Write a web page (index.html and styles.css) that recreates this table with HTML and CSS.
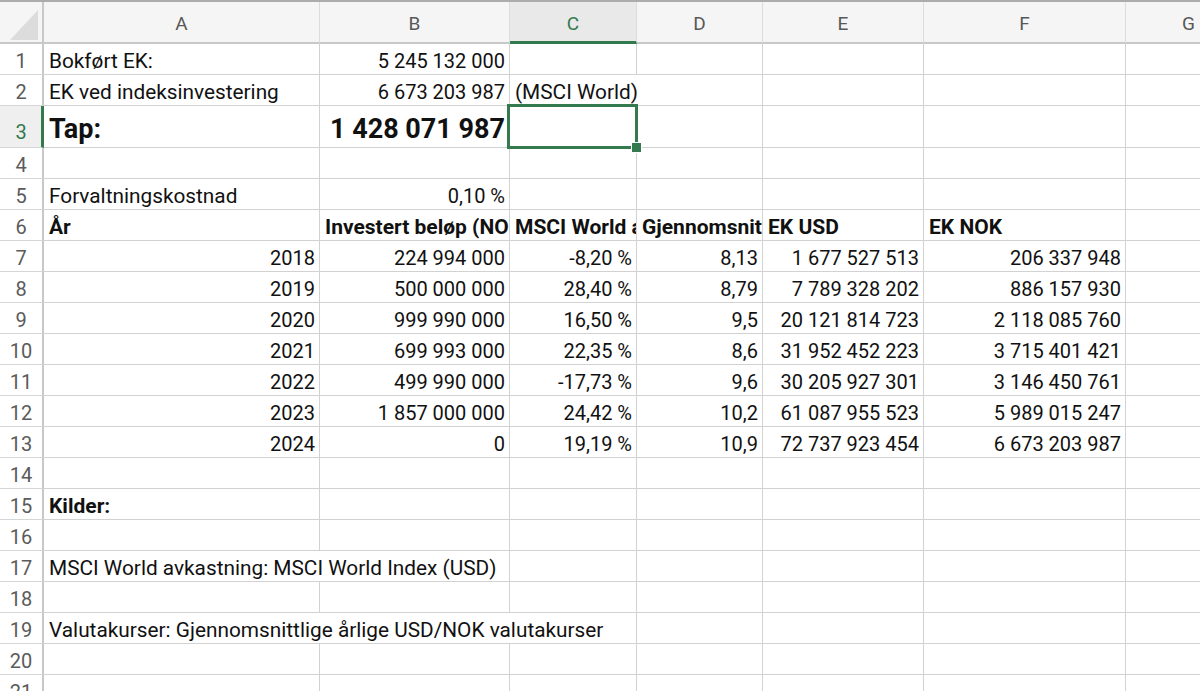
FILE: index.html
```html
<!DOCTYPE html>
<html lang="no">
<head>
<meta charset="utf-8">
<title>Regneark</title>
<link rel="stylesheet" href="styles.css">
</head>
<body>
<div class="sheet">
  <div class="row hdr">
    <div class="corner"><svg width="28" height="30" viewBox="0 0 28 30"><polygon points="28,0 28,30 0,30" fill="#dcdcdc"/></svg></div>
    <div class="ch">A</div><div class="ch">B</div><div class="ch sel">C</div><div class="ch">D</div><div class="ch">E</div><div class="ch">F</div><div class="ch">G</div>
  </div>

  <div class="row">
    <div class="rh">1</div>
    <div class="cell">Bokført EK:</div><div class="cell num">5 245 132 000</div>
    <div class="cell"></div><div class="cell"></div><div class="cell"></div><div class="cell"></div><div class="cell"></div>
  </div>
  <div class="row">
    <div class="rh">2</div>
    <div class="cell">EK ved indeksinvestering</div><div class="cell num">6 673 203 987</div>
    <div class="cell span2">(MSCI World)</div><div class="cell"></div><div class="cell"></div><div class="cell"></div>
  </div>
  <div class="row tall">
    <div class="rh rsel">3</div>
    <div class="cell big">Tap:</div><div class="cell num big">1 428 071 987</div>
    <div class="cell active"><span class="selbox"></span><span class="handle"></span></div><div class="cell"></div><div class="cell"></div><div class="cell"></div><div class="cell"></div>
  </div>
  <div class="row">
    <div class="rh">4</div>
    <div class="cell"></div><div class="cell"></div><div class="cell"></div><div class="cell"></div><div class="cell"></div><div class="cell"></div><div class="cell"></div>
  </div>
  <div class="row">
    <div class="rh">5</div>
    <div class="cell">Forvaltningskostnad</div><div class="cell num">0,10 %</div>
    <div class="cell"></div><div class="cell"></div><div class="cell"></div><div class="cell"></div><div class="cell"></div>
  </div>
  <div class="row">
    <div class="rh">6</div>
    <div class="cell b">År</div><div class="cell b">Investert beløp (NOK)</div><div class="cell b">MSCI World avkastning</div><div class="cell b">Gjennomsnittlig USD/NOK</div><div class="cell b">EK USD</div><div class="cell b">EK NOK</div><div class="cell"></div>
  </div>
  <div class="row">
    <div class="rh">7</div>
    <div class="cell num">2018</div><div class="cell num">224 994 000</div><div class="cell num">-8,20 %</div><div class="cell num">8,13</div><div class="cell num">1 677 527 513</div><div class="cell num">206 337 948</div><div class="cell"></div>
  </div>
  <div class="row">
    <div class="rh">8</div>
    <div class="cell num">2019</div><div class="cell num">500 000 000</div><div class="cell num">28,40 %</div><div class="cell num">8,79</div><div class="cell num">7 789 328 202</div><div class="cell num">886 157 930</div><div class="cell"></div>
  </div>
  <div class="row">
    <div class="rh">9</div>
    <div class="cell num">2020</div><div class="cell num">999 990 000</div><div class="cell num">16,50 %</div><div class="cell num">9,5</div><div class="cell num">20 121 814 723</div><div class="cell num">2 118 085 760</div><div class="cell"></div>
  </div>
  <div class="row">
    <div class="rh">10</div>
    <div class="cell num">2021</div><div class="cell num">699 993 000</div><div class="cell num">22,35 %</div><div class="cell num">8,6</div><div class="cell num">31 952 452 223</div><div class="cell num">3 715 401 421</div><div class="cell"></div>
  </div>
  <div class="row">
    <div class="rh">11</div>
    <div class="cell num">2022</div><div class="cell num">499 990 000</div><div class="cell num">-17,73 %</div><div class="cell num">9,6</div><div class="cell num">30 205 927 301</div><div class="cell num">3 146 450 761</div><div class="cell"></div>
  </div>
  <div class="row">
    <div class="rh">12</div>
    <div class="cell num">2023</div><div class="cell num">1 857 000 000</div><div class="cell num">24,42 %</div><div class="cell num">10,2</div><div class="cell num">61 087 955 523</div><div class="cell num">5 989 015 247</div><div class="cell"></div>
  </div>
  <div class="row">
    <div class="rh">13</div>
    <div class="cell num">2024</div><div class="cell num">0</div><div class="cell num">19,19 %</div><div class="cell num">10,9</div><div class="cell num">72 737 923 454</div><div class="cell num">6 673 203 987</div><div class="cell"></div>
  </div>
  <div class="row">
    <div class="rh">14</div>
    <div class="cell"></div><div class="cell"></div><div class="cell"></div><div class="cell"></div><div class="cell"></div><div class="cell"></div><div class="cell"></div>
  </div>
  <div class="row">
    <div class="rh">15</div>
    <div class="cell b">Kilder:</div><div class="cell"></div><div class="cell"></div><div class="cell"></div><div class="cell"></div><div class="cell"></div><div class="cell"></div>
  </div>
  <div class="row">
    <div class="rh">16</div>
    <div class="cell"></div><div class="cell"></div><div class="cell"></div><div class="cell"></div><div class="cell"></div><div class="cell"></div><div class="cell"></div>
  </div>
  <div class="row">
    <div class="rh">17</div>
    <div class="cell span2">MSCI World avkastning: MSCI World Index (USD)</div><div class="cell"></div><div class="cell"></div><div class="cell"></div><div class="cell"></div><div class="cell"></div>
  </div>
  <div class="row">
    <div class="rh">18</div>
    <div class="cell"></div><div class="cell"></div><div class="cell"></div><div class="cell"></div><div class="cell"></div><div class="cell"></div><div class="cell"></div>
  </div>
  <div class="row">
    <div class="rh">19</div>
    <div class="cell span3">Valutakurser: Gjennomsnittlige årlige USD/NOK valutakurser</div><div class="cell"></div><div class="cell"></div><div class="cell"></div><div class="cell"></div>
  </div>
  <div class="row">
    <div class="rh">20</div>
    <div class="cell"></div><div class="cell"></div><div class="cell"></div><div class="cell"></div><div class="cell"></div><div class="cell"></div><div class="cell"></div>
  </div>
  <div class="row">
    <div class="rh">21</div>
    <div class="cell"></div><div class="cell"></div><div class="cell"></div><div class="cell"></div><div class="cell"></div><div class="cell"></div><div class="cell"></div>
  </div>
</div>
</body>
</html>
```
FILE: styles.css
```css
html, body {
  margin: 0;
  padding: 0;
  background: #ffffff;
}
body {
  width: 1200px;
  height: 691px;
  overflow: hidden;
  font-family: Roboto, "Liberation Sans", sans-serif;
  color: #111111;
}
.sheet {
  border-top: 2px solid #acacac;
  width: 1300px;
}
.row {
  display: grid;
  grid-template-columns: 44px 276px 190px 127px 126px 161px 202px 126px;
  height: 31px;
}
.row.tall {
  height: 42px;
}
.row.hdr {
  height: 42px;
  background: #f5f5f5;
}
.corner {
  box-sizing: border-box;
  border-right: 2px solid #c8c8c8;
  border-bottom: 2px solid #c8c8c8;
  display: flex;
  justify-content: flex-end;
  align-items: flex-end;
  padding: 0 4px 2px 0;
}
.ch {
  box-sizing: border-box;
  border-right: 1px solid #dcdcdc;
  border-bottom: 2px solid #c8c8c8;
  display: flex;
  justify-content: center;
  align-items: center;
  font-size: 19px;
  color: #585858;
  padding-top: 2px;
}
.ch.sel {
  background: #e9e9e9;
  color: #337a4f;
  border-bottom: 3px solid #337a4f;
  padding-top: 3px;
}
.rh {
  box-sizing: border-box;
  border-right: 2px solid #c8c8c8;
  border-bottom: 1px solid #d6d6d6;
  display: flex;
  justify-content: center;
  align-items: flex-end;
  padding-bottom: 1px;
  font-size: 20px;
  line-height: 24px;
  color: #5b5b5b;
}
.rh.rsel {
  background: #efefef;
  color: #337a4f;
  border-right: 3px solid #337a4f;
  padding-left: 1px;
  padding-bottom: 3px;
}
.cell {
  box-sizing: border-box;
  border-right: 1px solid #d2d2d2;
  border-bottom: 1px solid #d2d2d2;
  overflow: hidden;
  white-space: nowrap;
  text-overflow: clip;
  display: flex;
  align-items: flex-end;
  padding: 0 4px 1px 5px;
  font-size: 20.8px;
  line-height: 24px;
}
.num {
  justify-content: flex-end;
  padding-right: 4px;
  font-size: 20px;
}
.b {
  font-weight: 700;
  font-size: 21px;
}
.big {
  font-weight: 700;
  font-size: 27px;
  line-height: 30px;
  padding-bottom: 3px;
}
.span2 {
  grid-column: span 2;
}
.span3 {
  grid-column: span 3;
}
.active {
  position: relative;
  overflow: visible;
}
.selbox {
  position: absolute;
  left: -3px;
  top: -2px;
  right: -2px;
  bottom: -2px;
  border: 3px solid #337a4f;
  z-index: 2;
}
.handle {
  position: absolute;
  right: -6px;
  bottom: -6px;
  width: 11px;
  height: 11px;
  background: #337a4f;
  border: 1px solid #ffffff;
  box-sizing: border-box;
  z-index: 3;
}
```
